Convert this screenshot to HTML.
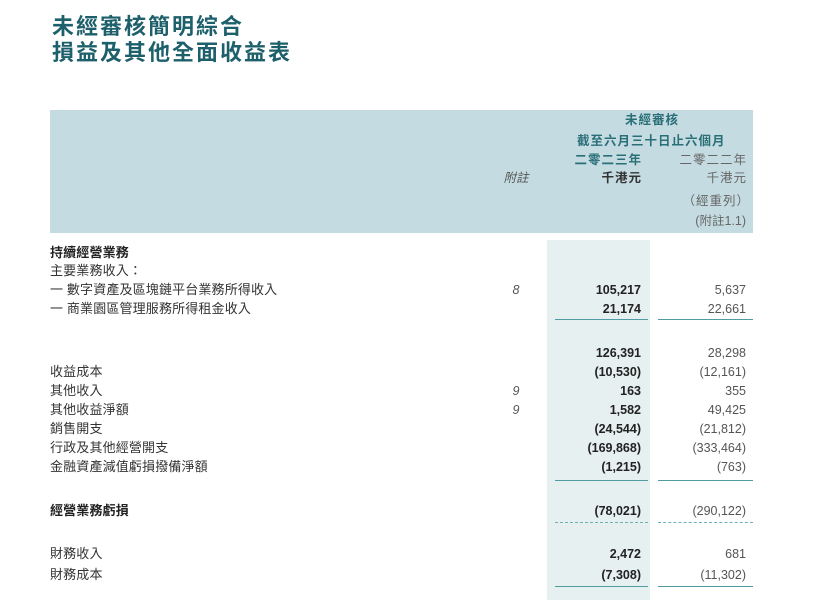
<!DOCTYPE html>
<html><head><meta charset="utf-8"><style>
body{margin:0;width:830px;height:600px;background:#fff;position:relative;overflow:hidden;font-family:"Liberation Sans","Noto Sans CJK TC",sans-serif;color:#333}
.t{position:absolute;left:52px;font-size:22px;font-weight:bold;color:#1d5f6a;letter-spacing:2px;line-height:26px;font-family:"Noto Sans CJK TC",sans-serif}
.hb{position:absolute;left:50px;top:110px;width:703px;height:123px;background:#c4dce1}
.hc{position:absolute;left:547px;top:240px;width:103px;height:360px;background:#e6f0f1}
.r{position:absolute;font-size:12.5px;line-height:16px;white-space:nowrap}
.l{left:50px;font-size:13px;letter-spacing:0.15px}
.n{width:40px;left:496px;text-align:center;font-style:italic;color:#555}
.a{right:189px;text-align:right;font-weight:bold;color:#222}
.b{right:84px;text-align:right;color:#555}
.h{color:#2a6e78;font-weight:bold;letter-spacing:1px}
.g{color:#666;letter-spacing:1px}
.hl{position:absolute;height:0;border-top:1.5px solid #4f9ca2}
.d{border-top:1.5px dashed #6fb0b5}
</style></head><body>
<div class="t" style="top:12px">未經審核簡明綜合</div>
<div class="t" style="top:38px">損益及其他全面收益表</div>
<div class="hb"></div>
<div class="hc"></div>
<div class="r h" style="left:625px;top:112px">未經審核</div>
<div class="r h" style="left:577px;top:133px">截至六月三十日止六個月</div>
<div class="r h" style="right:188px;top:152px">二零二三年</div>
<div class="r g" style="right:83px;top:152px">二零二二年</div>
<div class="r n" style="top:170px">附註</div>
<div class="r h" style="right:188px;top:170px;color:#333">千港元</div>
<div class="r g" style="right:83px;top:170px">千港元</div>
<div class="r g" style="right:80px;top:193px">（經重列）</div>
<div class="r" style="right:84px;top:213px;color:#666">(附註1.1)</div>

<div class="r l" style="top:245px;font-weight:bold;color:#222">持續經營業務</div>
<div class="r l" style="top:263px">主要業務收入：</div>
<div class="r l" style="top:282px">一 數字資產及區塊鏈平台業務所得收入</div><div class="r n" style="top:282px">8</div><div class="r a" style="top:282px">105,217</div><div class="r b" style="top:282px">5,637</div>
<div class="r l" style="top:301px">一 商業園區管理服務所得租金收入</div><div class="r a" style="top:301px">21,174</div><div class="r b" style="top:301px">22,661</div>
<div class="hl" style="left:555px;width:93px;top:319px"></div><div class="hl" style="left:658px;width:95px;top:319px"></div>
<div class="r a" style="top:345px">126,391</div><div class="r b" style="top:345px">28,298</div>
<div class="r l" style="top:364px">收益成本</div><div class="r a" style="top:364px">(10,530)</div><div class="r b" style="top:364px">(12,161)</div>
<div class="r l" style="top:383px">其他收入</div><div class="r n" style="top:383px">9</div><div class="r a" style="top:383px">163</div><div class="r b" style="top:383px">355</div>
<div class="r l" style="top:402px">其他收益淨額</div><div class="r n" style="top:402px">9</div><div class="r a" style="top:402px">1,582</div><div class="r b" style="top:402px">49,425</div>
<div class="r l" style="top:421px">銷售開支</div><div class="r a" style="top:421px">(24,544)</div><div class="r b" style="top:421px">(21,812)</div>
<div class="r l" style="top:440px">行政及其他經營開支</div><div class="r a" style="top:440px">(169,868)</div><div class="r b" style="top:440px">(333,464)</div>
<div class="r l" style="top:459px">金融資產減值虧損撥備淨額</div><div class="r a" style="top:459px">(1,215)</div><div class="r b" style="top:459px">(763)</div>
<div class="hl" style="left:555px;width:93px;top:480px"></div><div class="hl" style="left:658px;width:95px;top:480px"></div>
<div class="r l" style="top:503px;font-weight:bold;color:#222">經營業務虧損</div><div class="r a" style="top:503px">(78,021)</div><div class="r b" style="top:503px">(290,122)</div>
<div class="hl d" style="left:555px;width:93px;top:522px"></div><div class="hl d" style="left:658px;width:95px;top:522px"></div>
<div class="r l" style="top:546px">財務收入</div><div class="r a" style="top:546px">2,472</div><div class="r b" style="top:546px">681</div>
<div class="r l" style="top:567px">財務成本</div><div class="r a" style="top:567px">(7,308)</div><div class="r b" style="top:567px">(11,302)</div>
<div class="hl" style="left:555px;width:93px;top:586px"></div><div class="hl" style="left:658px;width:95px;top:586px"></div>
</body></html>
